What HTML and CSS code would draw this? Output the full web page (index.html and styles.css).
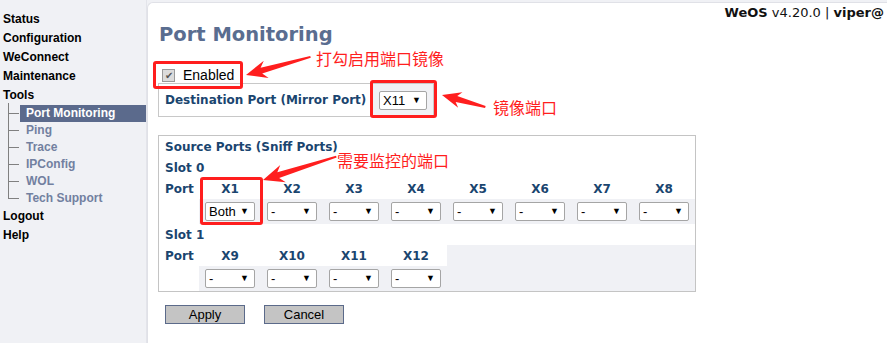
FILE: index.html
```html
<!DOCTYPE html>
<html lang="en">
<head>
    <meta charset="UTF-8">
    <title>Port Monitoring</title>
    <link rel="stylesheet" href="styles.css">
</head>
<body>
    <nav class="sidebar">
        <ul class="menu">
            <li><a href="#">Status</a></li>
            <li><a href="#">Configuration</a></li>
            <li><a href="#">WeConnect</a></li>
            <li><a href="#">Maintenance</a></li>
            <li><a href="#">Tools</a>
                <ul class="submenu">
                    <li class="active"><a href="#">Port Monitoring</a></li>
                    <li><a href="#">Ping</a></li>
                    <li><a href="#">Trace</a></li>
                    <li><a href="#">IPConfig</a></li>
                    <li><a href="#">WOL</a></li>
                    <li><a href="#">Tech Support</a></li>
                </ul>
            </li>
            <li><a href="#">Logout</a></li>
            <li><a href="#">Help</a></li>
        </ul>
    </nav>

    <main class="panel">
        <div class="topbar"><b>WeOS</b> v4.20.0 | <b>viper@</b></div>
        <h1>Port Monitoring</h1>

        <label class="enable"><span class="check">&#10004;</span> Enabled</label>

        <table class="dest">
            <tr>
                <th>Destination Port (Mirror Port)</th>
                <td class="dest-sel">
                    <span class="select"><select><option>X11</option></select></span>
                </td>
            </tr>
        </table>

        <div class="source">
            <table class="ports">
                <colgroup>
                    <col class="col-lbl">
                    <col span="8" class="col-port">
                </colgroup>
                <tr><th colspan="9" class="row-title">Source Ports (Sniff Ports)</th></tr>
                <tr><th colspan="9" class="row-title">Slot 0</th></tr>
                <tr class="names">
                    <th class="lbl">Port</th>
                    <th>X1</th><th>X2</th><th>X3</th><th>X4</th>
                    <th>X5</th><th>X6</th><th>X7</th><th>X8</th>
                </tr>
                <tr class="sels">
                    <td class="lbl"></td>
                    <td><span class="select"><select><option>Both</option></select></span></td>
                    <td><span class="select"><select><option>-</option></select></span></td>
                    <td><span class="select"><select><option>-</option></select></span></td>
                    <td><span class="select"><select><option>-</option></select></span></td>
                    <td><span class="select"><select><option>-</option></select></span></td>
                    <td><span class="select"><select><option>-</option></select></span></td>
                    <td><span class="select"><select><option>-</option></select></span></td>
                    <td><span class="select"><select><option>-</option></select></span></td>
                </tr>
                <tr><th colspan="9" class="row-title">Slot 1</th></tr>
                <tr class="names">
                    <th class="lbl">Port</th>
                    <th>X9</th><th>X10</th><th>X11</th><th>X12</th>
                    <td colspan="4" class="fill"></td>
                </tr>
                <tr class="sels">
                    <td class="lbl"></td>
                    <td><span class="select"><select><option>-</option></select></span></td>
                    <td><span class="select"><select><option>-</option></select></span></td>
                    <td><span class="select"><select><option>-</option></select></span></td>
                    <td><span class="select"><select><option>-</option></select></span></td>
                    <td colspan="4"></td>
                </tr>
            </table>
        </div>

        <div class="actions">
            <button type="button">Apply</button>
            <button type="button">Cancel</button>
        </div>
    </main>

    <!-- screenshot notes drawn on top -->
    <div class="notes">
        <div class="mark mark-enable"></div>
        <div class="mark mark-dest"></div>
        <div class="mark mark-x1"></div>
        <span class="note note-enable">打勾启用端口镜像</span>
        <span class="note note-dest">镜像端口</span>
        <span class="note note-x1">需要监控的端口</span>
        <svg class="arrows" width="887" height="343" viewBox="0 0 887 343">
            <g fill="#ff1e1e">
                <polygon transform="translate(246 75) rotate(-15.7)" points="0,0 21,-9 16,-3 67,-1 67,1 16,3 21,9"/>
                <polygon transform="translate(442 95) rotate(15.5)" points="0,0 19,-8 15,-3 45,-1 45,1 15,3 19,8"/>
                <polygon transform="translate(263 180) rotate(-17.7)" points="0,0 21,-9 16,-3 77,-1 77,1 16,3 21,9"/>
            </g>
        </svg>
    </div>
</body>
</html>
```

FILE: styles.css
```css
body {
    margin: 0;
    background-color: #f0f1f5;
    font-family: "Liberation Sans", Arial, sans-serif;
    display: flex;
    align-items: flex-start;
    height: 343px;
    overflow: hidden;
    position: relative;
}
.sidebar {
    width: 147px;
    flex: none;
    height: 343px;
    border-right: 1px solid #e3e4ea;
    padding-top: 10px;
    box-sizing: border-box;
}
.menu {
    list-style-type: none;
    margin: 0;
    padding: 0;
}
.menu > li > a {
    display: block;
    padding-left: 3px;
    line-height: 19px;
    font-size: 12px;
    font-weight: bold;
    color: #000;
    text-decoration: none;
}
.submenu {
    list-style-type: none;
    margin: 0 0 0 20px;
    padding: 0;
}
.submenu li {
    position: relative;
}
.submenu li::before {
    content: "";
    position: absolute;
    left: -12px;
    top: -2px;
    width: 10px;
    height: 10px;
    border-left: 1px solid #808080;
    border-bottom: 1px solid #808080;
}
.submenu li::after {
    content: "";
    position: absolute;
    left: -12px;
    top: 8px;
    height: 100%;
    border-left: 1px solid #808080;
}
.submenu li:last-child::after {
    display: none;
}
.submenu a {
    display: block;
    padding-left: 6px;
    line-height: 17px;
    font-size: 12px;
    font-weight: bold;
    color: #7280a0;
    text-decoration: none;
}
.submenu .active a {
    background-color: #5b6a8c;
    color: #fff;
}
.panel {
    flex: 1;
    margin-top: 2px;
    height: 341px;
    background-color: #fff;
    border-top: 1px solid #e0e1e7;
    border-left: 1px solid #e0e1e7;
    border-top-left-radius: 6px;
    box-sizing: border-box;
    padding: 0 0 0 10px;
}
.topbar {
    text-align: right;
    font-family: "DejaVu Sans", Verdana, sans-serif;
    font-size: 13px;
    line-height: 16px;
    padding: 2px 3px 0 0;
    color: #111;
    white-space: nowrap;
}
h1 {
    margin: 1px 0 0 1px;
    font-family: "DejaVu Sans", Verdana, sans-serif;
    font-size: 19.5px;
    line-height: 26px;
    color: #5a6d90;
}
.enable {
    display: flex;
    align-items: center;
    margin: 19px 0 0 4px;
    height: 16px;
    font-size: 14px;
    color: #000;
}
.check {
    width: 11px;
    height: 11px;
    border: 1px solid #9a9a9a;
    background-color: #dcdcdc;
    color: #555;
    font-size: 10px;
    line-height: 11px;
    text-align: center;
    margin-right: 8px;
}
.dest {
    margin-top: 0;
    border-collapse: collapse;
    border: 1px solid #c8c8c8;
    height: 34px;
}
.dest th {
    font-family: "DejaVu Sans", Verdana, sans-serif;
    font-size: 12px;
    color: #1a456f;
    text-align: left;
    padding: 0 6px 0 6px;
    width: 202px;
}
.dest-sel {
    background-color: #f0f1f5;
    padding: 0 6px 0 6px;
}
.select {
    position: relative;
    display: inline-block;
    vertical-align: middle;
}
.select select {
    appearance: none;
    -webkit-appearance: none;
    width: 50px;
    height: 19px;
    border: 1px solid #a5a5a5;
    border-radius: 2px;
    background-color: #fff;
    font-family: "Liberation Sans", Arial, sans-serif;
    font-size: 13px;
    color: #000;
    padding: 0 0 0 3px;
    margin: 0;
    display: block;
}
.select::after {
    content: "\25BC";
    position: absolute;
    right: 6px;
    top: 4px;
    font-size: 9px;
    color: #000;
    pointer-events: none;
}
.dest .select select {
    width: 48px;
}
.source {
    margin-top: 18px;
    width: 536px;
    border: 1px solid #c4c4c4;
}
.ports {
    border-collapse: collapse;
    width: 536px;
    table-layout: fixed;
}
.col-lbl {
    width: 40px;
}
.col-port {
    width: 62px;
}
.ports th,
.ports td {
    padding: 0;
}
.ports th {
    font-family: "DejaVu Sans", Verdana, sans-serif;
    font-size: 12px;
    color: #1a456f;
    height: 21px;
}
.ports .row-title {
    text-align: left;
    padding-left: 6px;
}
.ports .lbl {
    text-align: left;
    padding-left: 6px;
    background-color: #fff;
}
.ports .names .fill {
    background-color: #f0f1f5;
}
.ports .sels td {
    height: 25px;
    background-color: #f0f1f5;
    padding-left: 6px;
}
.ports .sels td.lbl {
    background-color: #fff;
}
.actions {
    margin: 13px 0 0 7px;
    display: flex;
    gap: 19px;
}
.actions button {
    width: 80px;
    height: 19px;
    padding: 0;
    background-color: #c4c4c4;
    border: 1px solid #5b6a8a;
    font-family: "Liberation Sans", Arial, sans-serif;
    font-size: 13px;
    color: #000;
}
.notes {
    position: absolute;
    left: 0;
    top: 0;
    width: 887px;
    height: 343px;
    pointer-events: none;
}
.arrows {
    position: absolute;
    left: 0;
    top: 0;
}
.mark {
    position: absolute;
    border: 3px solid #ff1e1e;
    border-radius: 3px;
    box-sizing: border-box;
}
.mark-enable {
    left: 153px;
    top: 61px;
    width: 90px;
    height: 28px;
}
.mark-dest {
    left: 370px;
    top: 80px;
    width: 67px;
    height: 38px;
}
.mark-x1 {
    left: 200px;
    top: 177px;
    width: 63px;
    height: 48px;
}
.note {
    position: absolute;
    font-family: "Noto Sans CJK SC", sans-serif;
    font-size: 16px;
    line-height: 20px;
    color: #ff1e1e;
    white-space: nowrap;
}
.note-enable {
    left: 316px;
    top: 48px;
}
.note-dest {
    left: 493px;
    top: 97px;
}
.note-x1 {
    left: 337px;
    top: 150px;
}
```
